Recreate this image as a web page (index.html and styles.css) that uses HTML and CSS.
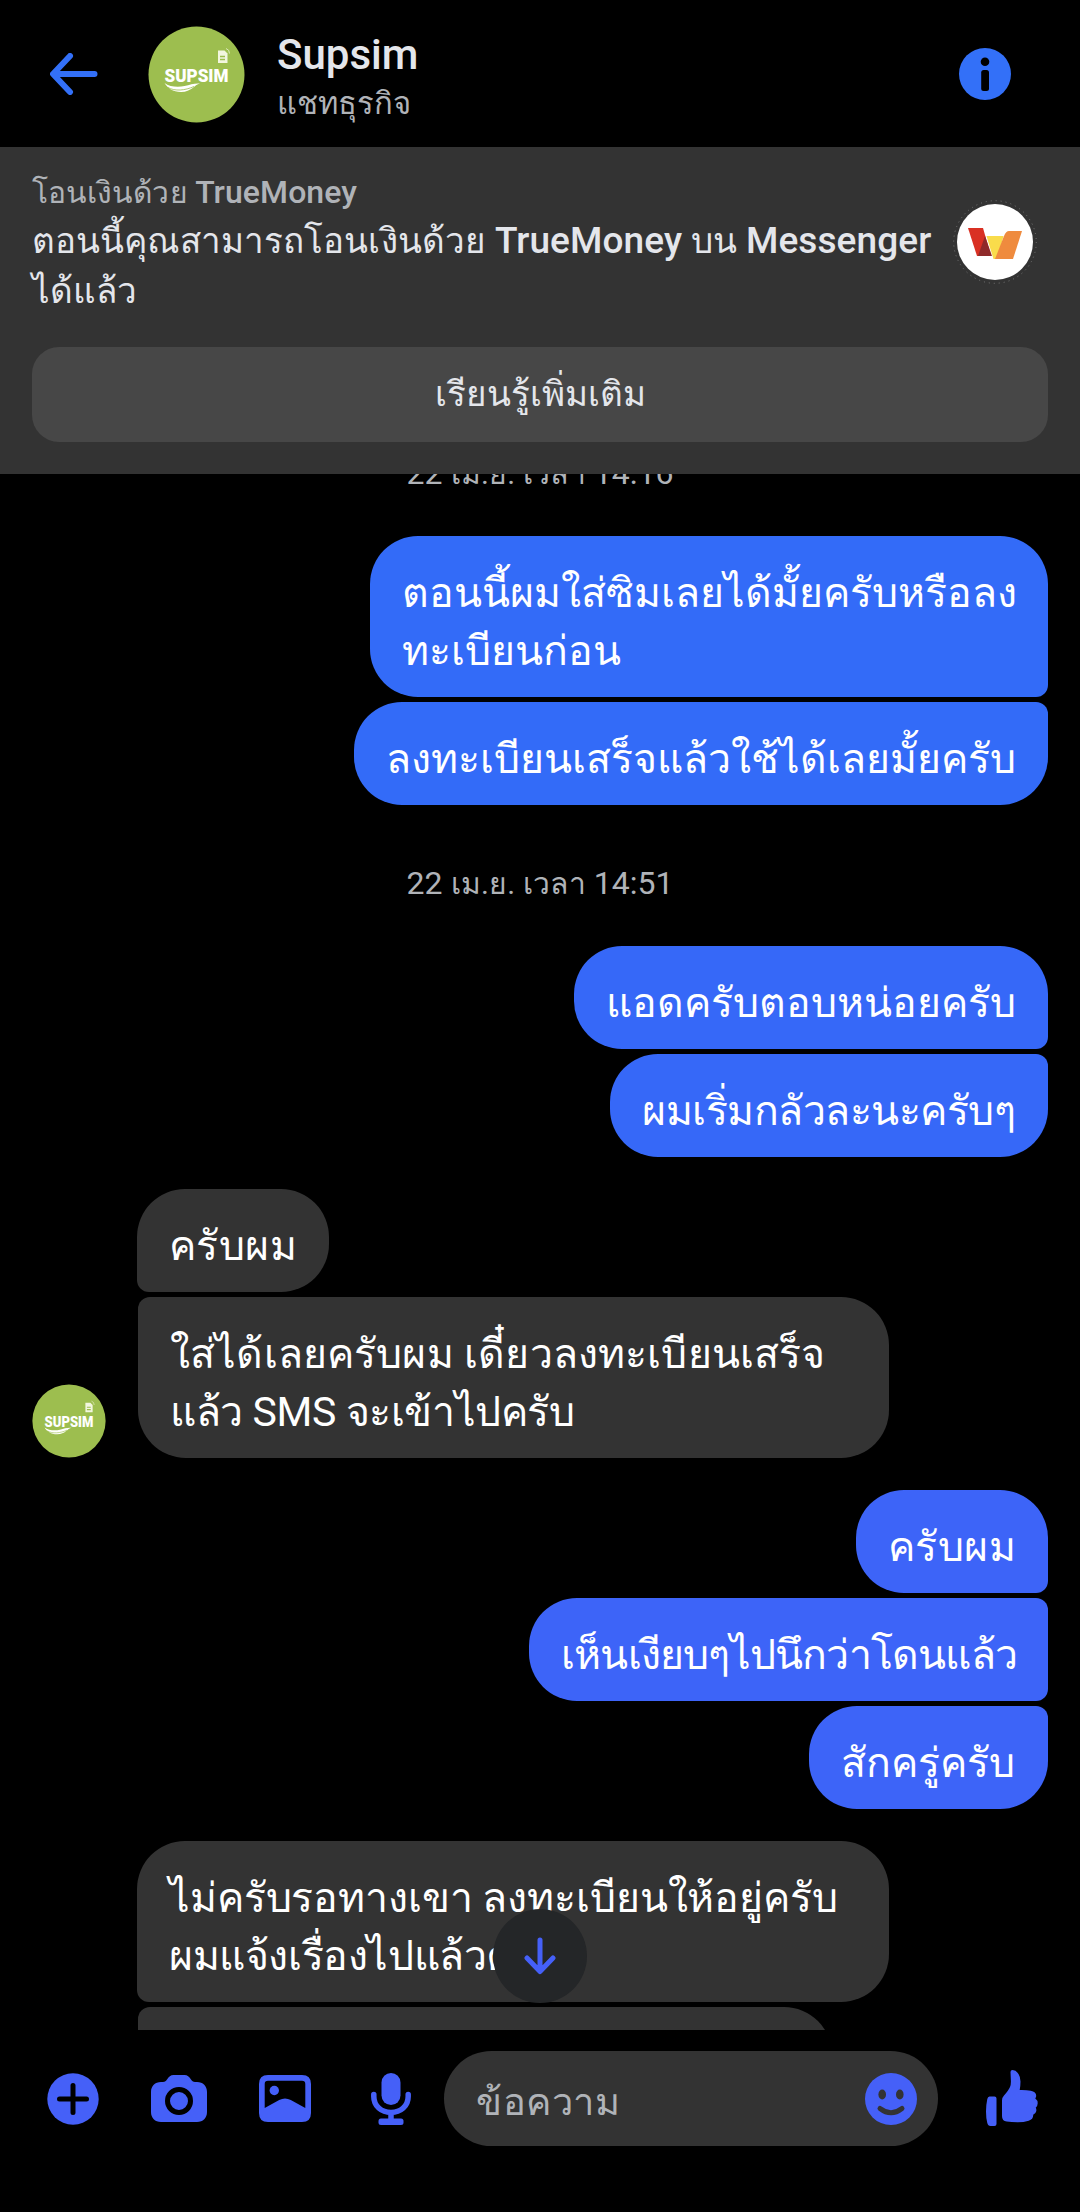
FILE: index.html
```html
<!DOCTYPE html>
<html lang="th">
<head>
<meta charset="utf-8">
<title>Supsim</title>
<link rel="stylesheet" href="styles.css">
</head>
<body>
<div class="app">
  <header class="topbar">
    <svg class="back" viewBox="0 0 48 42"><path d="M20 3L3 21l17 18M4 21h40.500" fill="none" stroke="currentColor" stroke-width="6" stroke-linecap="round" stroke-linejoin="round"/></svg>
    <svg class="avatar-lg" viewBox="0 0 97 97">
      <g id="supsim">
        <circle cx="48.500" cy="48.500" r="48" fill="#9dbe4f"/>
        <text x="48.500" y="56" text-anchor="middle" textLength="64" lengthAdjust="spacingAndGlyphs" class="logo-word">SUPSIM</text>
        <path d="M16.500 57c5 4 14 4.500 20 3 6-1.500 10-3 15.500-2.500-6 1-8 8.500-19 8.500-8 0-13.500-4-16.500-9z" fill="#fff"/>
        <path d="M20 61.500c7 4 17 3 26-1" fill="none" stroke="#9dbe4f" stroke-width=".8"/>
        <path d="M70 24.500h6.500l3 3V37h-9.500z" fill="#f2f6df"/>
        <path d="M72 30.500h5M72 33.500h5" stroke="#9dbe4f" stroke-width="1.500"/>
        <path d="M78 22.500q3.500 1 3.500 5" fill="none" stroke="#dbe8b8" stroke-width="1"/>
      </g>
    </svg>
    <div class="title">
      <h1>Supsim</h1>
      <p>แชทธุรกิจ</p>
    </div>
    <svg class="info" viewBox="0 0 52 52"><circle cx="26" cy="26" r="26" fill="currentColor"/><circle cx="26" cy="13.700" r="4.300"/><rect x="22.200" y="22" width="7.800" height="21" rx="2.500"/></svg>
  </header>

  <section class="banner">
    <div class="promo">
      <div class="promo-text">
        <p class="promo-label">โอนเงินด้วย <b>TrueMoney</b></p>
        <p class="promo-body">ตอนนี้คุณสามารถโอนเงินด้วย <b>TrueMoney</b> บน <b>Messenger</b><br>ได้แล้ว</p>
      </div>
      <svg class="promo-logo" viewBox="0 0 84 84">
        <circle cx="42" cy="42" r="41.300" fill="none" stroke="#777" stroke-width="1" stroke-dasharray="1 4"/>
        <circle cx="42" cy="42" r="38" fill="#fff"/>
        <path d="M15 28h15l8 28H24z" fill="#d93023"/>
        <path d="M33.500 36h17l-6 23h-4z" fill="#f9dc4b"/>
        <path d="M32 36l7 20H25z" fill="#8f2a2a"/>
        <path d="M56 31h13l-9 28H42l9-23q2-5 5-5z" fill="#ef8b3e"/>
      </svg>
    </div>
    <button class="learn">เรียนรู้เพิ่มเติม</button>
  </section>

  <main class="chat">
    <time class="stamp stamp-first">22 <span>เม.ย. เวลา</span> 14:16</time>
    <div class="group out g1">
      <p class="bubble b1">ตอนนี้ผมใส่ซิมเลยได้มั้ยครับหรือลง<br>ทะเบียนก่อน</p>
      <p class="bubble b2">ลงทะเบียนเสร็จแล้วใช้ได้เลยมั้ยครับ</p>
    </div>
    <time class="stamp">22 <span>เม.ย. เวลา</span> 14:51</time>
    <div class="group out g2">
      <p class="bubble b3">แอดครับตอบหน่อยครับ</p>
      <p class="bubble b4">ผมเริ่มกลัวละนะครับๆ</p>
    </div>
    <div class="row">
      <svg class="avatar-sm" viewBox="0 0 97 97"><use href="#supsim"/></svg>
      <div class="group in">
        <p class="bubble b5">ครับผม</p>
        <p class="bubble b6">ใส่ได้เลยครับผม เดี๋ยวลงทะเบียนเสร็จ<br><span class="tight">แล้ว SMS จะเข้าไปครับ</span></p>
      </div>
    </div>
    <div class="group out g3">
      <p class="bubble b7">ครับผม</p>
      <p class="bubble b8">เห็นเงียบๆไปนึกว่าโดนแล้ว</p>
      <p class="bubble b9">สักครู่ครับ</p>
    </div>
    <div class="row">
      <div class="group in">
        <p class="bubble b10">ไม่ครับรอทางเขา ลงทะเบียนให้อยู่ครับ<br><span class="tight">ผมแจ้งเรื่องไปแล้วครับ</span></p>
        <p class="bubble b11"></p>
      </div>
    </div>
    <button class="jump"><svg viewBox="0 0 34 38"><path d="M17 3v30M4 21l13 13.500L30 21" fill="none" stroke="currentColor" stroke-width="5" stroke-linecap="round" stroke-linejoin="round"/></svg></button>
  </main>

  <footer class="composer">
    <svg class="ic-plus" viewBox="0 0 52 52"><circle cx="26" cy="26" r="25.700" fill="currentColor"/><path d="M26 12.500v27M12.500 26h27" stroke="#000" stroke-width="5" stroke-linecap="round"/></svg>
    <svg class="ic-camera" viewBox="0 0 56 47"><path d="M10 7h2c2 0 3-1 4-2.500C18 1.500 19.500 0 22.500 0h11c3 0 4.500 1.500 6.500 4.500C41 6 42 7 44 7h2c6 0 10 4 10 10v20c0 6-4 10-10 10H10C4 47 0 43 0 37V17C0 11 4 7 10 7z" fill="currentColor"/><circle cx="28" cy="26" r="11.500" fill="none" stroke="#000" stroke-width="5"/></svg>
    <svg class="ic-image" viewBox="0 0 52 47"><path fill="currentColor" fill-rule="evenodd" d="M9 0h34q9 0 9 9v29q0 9-9 9H9q-9 0-9-9V9q0-9 9-9zM9 5.700q-3.300 0-3.300 3.300v24l14.500-8q5.800-3 11.600 0l14.500 8V9q0-3.300-3.300-3.300z"/><circle cx="15.300" cy="15.500" r="4.700" fill="currentColor"/></svg>
    <svg class="ic-mic" viewBox="0 0 40 52"><rect x="10.500" y="0" width="19" height="32" rx="9.500" fill="currentColor"/><path d="M2.800 21.500v2c0 9.500 7.500 16 17.200 16s17.200-6.500 17.200-16v-2M20 40v8" fill="none" stroke="currentColor" stroke-width="5.500" stroke-linecap="round"/><rect x="7.500" y="45.500" width="25" height="6.500" rx="2.500" fill="currentColor"/></svg>
    <div class="field">
      <span>ข้อความ</span>
      <svg class="ic-smile" viewBox="0 0 52 52"><circle cx="26" cy="26" r="26" fill="currentColor"/><ellipse cx="17.200" cy="21.500" rx="3.800" ry="5" fill="#333"/><ellipse cx="34.800" cy="21.500" rx="3.800" ry="5" fill="#333"/><path d="M15 35.500q11 8.500 22 0" fill="none" stroke="#333" stroke-width="5" stroke-linecap="round"/></svg>
    </div>
    <svg class="ic-thumb" viewBox="0 0 52 56"><path d="M3.500 26.500h5q2 0 2 2V54q0 2-2 2h-4Q2 56 1.300 53 0 48 0 41.500T1.300 29q.5-2.500 2.200-2.500z" fill="currentColor"/><path d="M24.500 2q0-2 2-2 3.500 0 6 4 2 3 2 7.500 0 4-.8 8.500 6.500-.2 11 .8 5.500 1 5.500 5 0 1.500-1 2.500 2.500 2 2.500 5 0 2.500-2 4.500 1 1.500.5 3.500-.5 2.500-3 3.500.3 4.500-4.500 6-5 1.500-11 1.500-6.500 0-11-.8Q16 51 16 46V30.500q0-3 2-5 4.500-5 6-8.500 1-2.500.9-6z" fill="currentColor"/></svg>
  </footer>
</div>
</body>
</html>
```
FILE: styles.css
```css
* { box-sizing: border-box; }
body { margin: 0; background: #000; font-family: Roboto, "Droid Sans Thai", serif; color: #fff; }
h1, p { margin: 0; font-weight: 400; }
b { font-weight: 500; }
svg { display: block; flex: none; }
button { border: 0; padding: 0; font: inherit; color: inherit; }
.logo-word { font: 900 18px Roboto, sans-serif; fill: #fff; }

.app { display: flex; flex-direction: column; width: 1080px; height: 2212px; overflow: hidden; }

.topbar { display: flex; align-items: center; height: 147px; flex: none; padding: 0 69px 0 50px; color: #3370f8; }
.back { width: 48px; height: 42px; }
.avatar-lg { width: 97px; height: 97px; margin-left: 50px; margin-top: 2px; }
.title { flex: 1; margin-left: 32px; padding-top: 9px; }
.title h1 { font-size: 42px; line-height: 50px; font-weight: 500; color: #e4e6eb; }
.title p { font-size: 31px; line-height: 47px; color: #b0b3b8; }
.info { width: 52px; height: 52px; }

.banner { height: 327px; flex: none; background: #333; padding: 22px 32px 32px; display: flex; flex-direction: column; }
.promo { display: flex; height: 178px; }
.promo-text { flex: 1; white-space: nowrap; }
.promo-label { font-size: 30px; line-height: 48px; height: 48px; color: #b0b3b8; letter-spacing: .07px; }
.promo-label b { font-size: 32px; line-height: 1; }
.promo-body { font-size: 35px; line-height: 50px; color: #e4e6eb; letter-spacing: .1px; }
.promo-body b { font-size: 37px; line-height: 1; }
.promo-logo { width: 84px; height: 84px; margin: 31px 11px 0 0; }
.learn { height: 95px; border-radius: 27px; background: #474747; color: #e4e6eb; font-size: 35px; line-height: 95px; }

.chat { position: relative; height: 1556px; flex: none; overflow: hidden; display: flex; flex-direction: column; }
.stamp { display: block; text-align: center; font-size: 32px; line-height: 40px; height: 40px; color: #b0b3b8; margin: 58px 0 43px; }
.stamp span { font-size: 30px; line-height: 1; letter-spacing: .2px; }
.stamp-first { margin: -21px 0 43px; }
.group { display: flex; flex-direction: column; gap: 5px; }
.out { align-items: flex-end; padding-right: 32px; }
.in { align-items: flex-start; }
.row { display: flex; align-items: flex-end; margin: 32px 0; padding-left: 137px; position: relative; }
.avatar-sm { width: 74px; height: 74px; margin: 0 31px 0 -105px; }
.bubble { padding: 28px 32px 17px; font-size: 41px; line-height: 58px; border-radius: 48px; white-space: nowrap; }
.out .bubble:not(:last-child) { border-bottom-right-radius: 12px; }
.out .bubble:not(:first-child) { border-top-right-radius: 12px; }
.in .bubble { background: #333; }
.in .bubble:not(:last-child) { border-bottom-left-radius: 12px; }
.in .bubble:not(:first-child) { border-top-left-radius: 12px; margin-left: 1px; }
.g1 .bubble { background: #336bf8; }
.g2 .bubble { background: #3668f8; }
.g3 .bubble { background: #3d64f8; }
.tight { letter-spacing: -.4px; }
.b1 { width: 678px; }
.b2 { width: 694px; }
.b3 { width: 474px; }
.b4 { width: 438px; letter-spacing: -.5px; }
.b5, .b7 { width: 192px; letter-spacing: .4px; }
.b6 { width: 751px; letter-spacing: .15px; }
.b8 { width: 519px; letter-spacing: -.8px; }
.b9 { width: 239px; }
.b10 { width: 752px; letter-spacing: -.12px; }
.b11 { width: 694px; height: 103px; }
.jump { position: absolute; left: 493px; top: 1435px; width: 94px; height: 94px; border-radius: 50%; background: #242628; color: #4560f8; display: flex; align-items: center; justify-content: center; }
.jump svg { width: 34px; height: 38px; }

.composer { display: flex; align-items: center; height: 137px; flex: none; color: #4560f8; padding-left: 47px; }
.ic-plus { width: 52px; height: 52px; }
.ic-camera { width: 56px; height: 47px; margin-left: 52px; }
.ic-image { width: 52px; height: 47px; margin-left: 52px; }
.ic-mic { width: 40px; height: 52px; margin-left: 60px; }
.field { display: flex; align-items: center; justify-content: space-between; width: 494px; height: 95px; margin-left: 33px; padding: 0 21px 0 32px; border-radius: 48px; background: #333; color: #b0b3b8; font-size: 38px; line-height: 50px; letter-spacing: .5px; }
.field span { padding-top: 6px; }
.ic-smile { width: 52px; height: 52px; color: #4560f8; }
.ic-thumb { width: 52px; height: 56px; margin: -2px 0 0 48px; }
```
